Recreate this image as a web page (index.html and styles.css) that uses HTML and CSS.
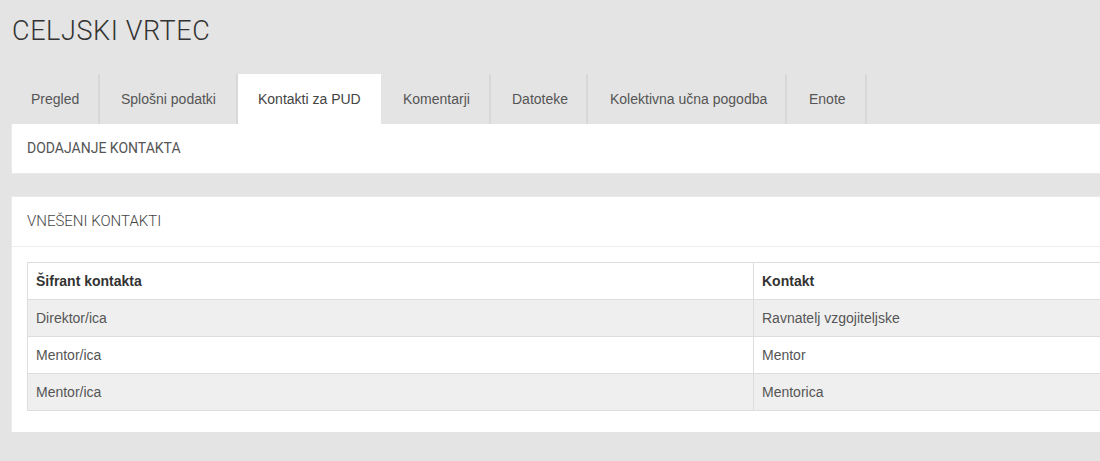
FILE: index.html
```html
<!DOCTYPE html>
<html>
<head>
<meta charset="utf-8">
<link rel="stylesheet" href="styles.css">
</head>
<body>
<div class="page">
  <h1 class="title">CELJSKI VRTEC</h1>
  <ul class="tabs">
    <li class="tab">Pregled</li>
    <li class="tab">Splošni podatki</li>
    <li class="tab active">Kontakti za PUD</li>
    <li class="tab">Komentarji</li>
    <li class="tab">Datoteke</li>
    <li class="tab">Kolektivna učna pogodba</li>
    <li class="tab">Enote</li>
  </ul>
  <section class="panel panel-first">
    <div class="panel-head">DODAJANJE KONTAKTA</div>
  </section>
  <section class="panel panel-second">
    <div class="panel-head bordered">VNEŠENI KONTAKTI</div>
    <div class="panel-body">
      <table class="grid">
        <thead>
          <tr><th class="col1">Šifrant kontakta</th><th>Kontakt</th></tr>
        </thead>
        <tbody>
          <tr class="odd"><td>Direktor/ica</td><td>Ravnatelj vzgojiteljske</td></tr>
          <tr><td>Mentor/ica</td><td>Mentor</td></tr>
          <tr class="odd"><td>Mentor/ica</td><td>Mentorica</td></tr>
        </tbody>
      </table>
    </div>
  </section>
</div>
</body>
</html>
```

FILE: styles.css
```css
html, body {
  margin: 0;
  padding: 0;
  overflow: hidden;
}
body {
  background: #e4e4e4;
  font-family: "Liberation Sans", Arial, sans-serif;
  color: #555;
  width: 1100px;
  height: 461px;
}
.page {
  padding-left: 11px;
  width: 1130px;
}
.title {
  margin: 0 0 0 1px;
  padding-top: 15px;
  height: 74px;
  box-sizing: border-box;
  font-family: "Roboto", sans-serif;
  font-weight: 300;
  font-size: 27px;
  letter-spacing: 0.6px;
  line-height: 32px;
  color: #333;
}
.tabs {
  list-style: none;
  margin: 0 0 0 1px;
  padding: 0;
  display: flex;
  height: 50px;
}
.tab {
  flex: 0 0 auto;
  box-sizing: border-box;
  height: 50px;
  line-height: 50px;
  font-size: 14px;
  color: #555;
  white-space: nowrap;
  padding: 0 0 0 19px;
  border-right: 2px solid #d8d8d8;
}
.tab:nth-child(1) { width: 88px; }
.tab:nth-child(2) { width: 138px; padding-left: 21px; }
.tab:nth-child(3) { width: 144px; }
.tab:nth-child(4) { width: 109px; padding-left: 21px; }
.tab:nth-child(5) { width: 97px; padding-left: 21px; }
.tab:nth-child(6) { width: 199px; padding-left: 22px; }
.tab:nth-child(7) { width: 80px; padding-left: 22px; }
.tab.active {
  background: #fff;
  border-right: 1px solid #e4e4e4;
  color: #444;
  padding-left: 20px;
}
.panel {
  background: #fff;
  border: 1px solid #eaeaea;
}
.panel-first {
  height: 50px;
  box-sizing: border-box;
  border-top: none;
}
.panel-second {
  margin-top: 22px;
  border-bottom: none;
}
.panel-head {
  height: 49px;
  box-sizing: border-box;
  padding-left: 15px;
  line-height: 49px;
  font-family: "Roboto", sans-serif;
  font-weight: 400;
  font-size: 14px;
  color: #555;
}
.panel-head.bordered {
  border-bottom: 1px solid #eee;
  height: 50px;
  line-height: 48px;
  font-weight: 300;
  font-size: 15px;
  color: #444;
}
.panel-body {
  padding: 15px 0 21px 15px;
}
.grid {
  border-collapse: collapse;
  width: 1130px;
  border: 1px solid #ddd;
  font-size: 14px;
}
.grid th, .grid td {
  height: 37px;
  box-sizing: border-box;
  padding: 0 8px;
  text-align: left;
  border-top: 1px solid #ddd;
  border-left: 1px solid #ddd;
}
.grid th {
  color: #333;
  font-weight: bold;
}
.grid .col1 { width: 726px; }
.grid td { color: #555; }
.grid tr.odd td { background: #efefef; }
```
